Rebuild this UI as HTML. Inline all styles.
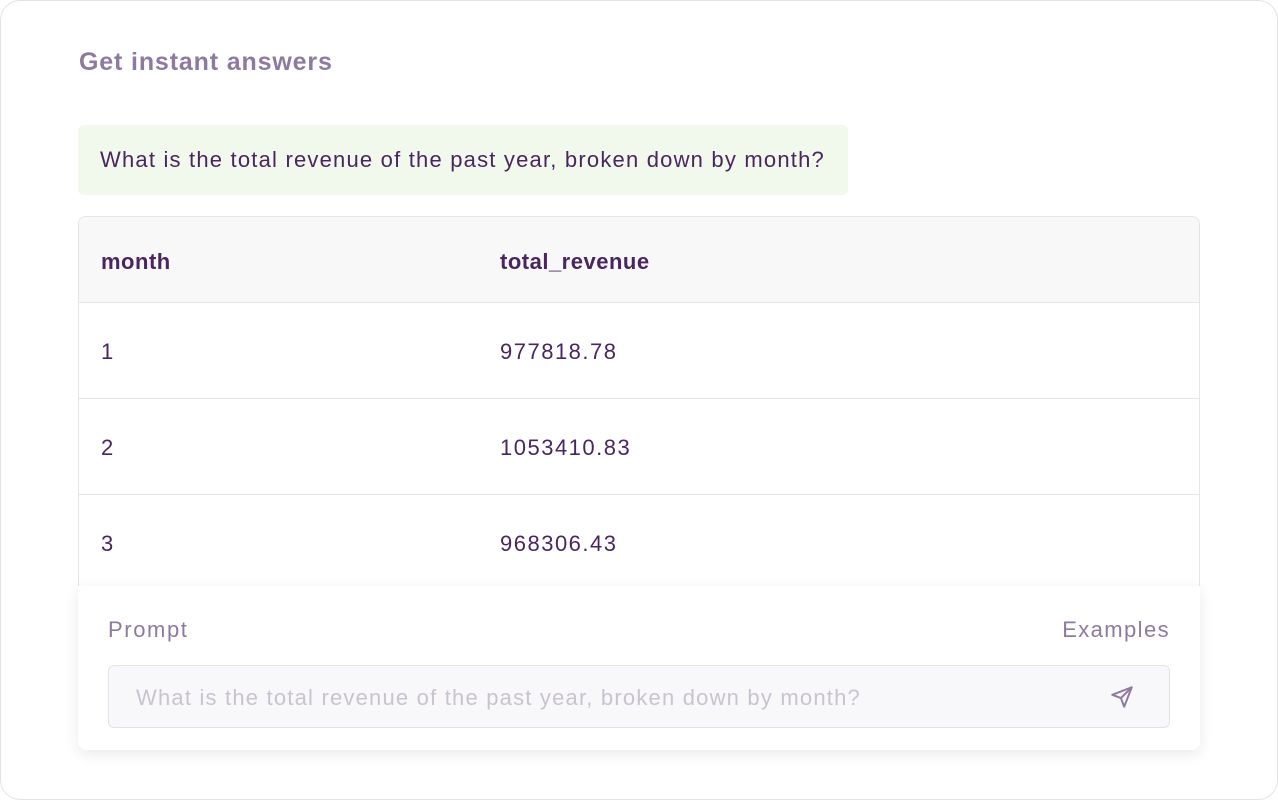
<!DOCTYPE html>
<html><head><style>
*{box-sizing:border-box;margin:0;padding:0}
body{width:1278px;height:800px;background:#fff;font-family:"Liberation Sans",sans-serif;position:relative;overflow:hidden}
.card{position:absolute;left:0;top:0;width:1278px;height:800px;border:1.5px solid #e4e2e8;border-radius:20px;background:#fff}
.title{position:absolute;left:79px;top:48px;font-size:25px;font-weight:bold;color:#8e7a9f;letter-spacing:0.85px}
.q{position:absolute;left:78px;top:125px;width:770px;height:70px;background:#f1f8ec;border-radius:6px;color:#4a2560;font-size:22px;padding:22px 0 0 22px;letter-spacing:1.2px}
.tbl{position:absolute;left:78px;top:216px;width:1122px;height:470px;border:1px solid #e6e3ea;border-radius:8px;overflow:hidden;background:#fff}
.row{height:96px;border-bottom:1px solid #e6e3ea;position:relative;color:#4a2560;font-size:22px;letter-spacing:1.5px}
.row span{position:absolute;top:36px}
.hd{height:86px;background:#f8f8f8;font-weight:bold;letter-spacing:0.5px}
.hd span{top:32px}
.c1{left:22px}.c2{left:421px}
.panel{position:absolute;left:78px;top:586px;width:1122px;height:164px;background:#fff;border-radius:0 0 8px 8px;box-shadow:0 4px 14px rgba(60,40,80,.10)}
.pl{position:absolute;left:30px;top:31px;font-size:22px;color:#8e7a9f;letter-spacing:1.6px}
.ex{position:absolute;right:30px;top:31px;font-size:22px;color:#8e7a9f;letter-spacing:1.4px}
.inp{position:absolute;left:30px;top:79px;width:1062px;height:63px;border:1.5px solid #e4e2e8;border-radius:6px;background:#f8f7f9;font-size:22px;color:#c9c3cf;padding:19px 0 0 27px;letter-spacing:1.2px}
.inp svg{position:absolute;right:34px;top:18px}
</style></head><body>
<div class="card"></div>
<div class="title">Get instant answers</div>
<div class="q">What is the total revenue of the past year, broken down by month?</div>
<div class="tbl">
<div class="row hd"><span class="c1">month</span><span class="c2">total_revenue</span></div>
<div class="row"><span class="c1">1</span><span class="c2">977818.78</span></div>
<div class="row"><span class="c1">2</span><span class="c2">1053410.83</span></div>
<div class="row"><span class="c1">3</span><span class="c2">968306.43</span></div>
</div>
<div class="panel">
<div class="pl">Prompt</div>
<div class="ex">Examples</div>
<div class="inp">What is the total revenue of the past year, broken down by month?
<svg width="26" height="26" viewBox="0 0 24 24" fill="none" stroke="#8e7a9f" stroke-width="1.8" stroke-linejoin="round" stroke-linecap="round"><path d="M21 3 L3 10 L11 13 L14 21 Z M21 3 L11 13"/></svg>
</div>
</div>
</body></html>
